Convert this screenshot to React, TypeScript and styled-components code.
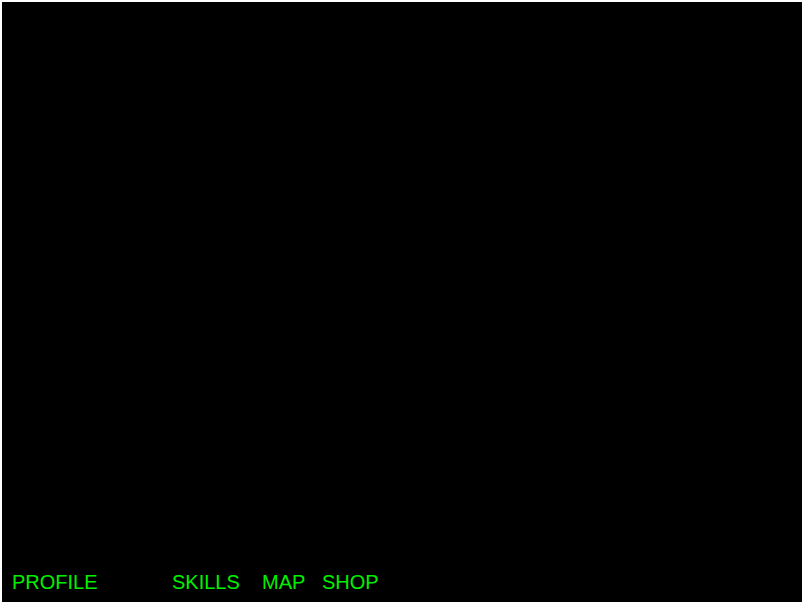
import React from "react";
import styled, { createGlobalStyle } from "styled-components";

const Global = createGlobalStyle`
  html, body {
    margin: 0;
    padding: 0;
    background: #ffffff;
  }
  body {
    font-family: "Liberation Sans", Arial, sans-serif;
  }
`;

const Screen = styled.div`
  margin: 2px 0 0 2px;
  width: 800px;
  height: 600px;
  background: #000000;
  display: flex;
  flex-direction: column;
  justify-content: flex-end;
`;

const Nav = styled.nav`
  display: flex;
  align-items: flex-end;
  padding: 0 10px 8px 10px;
`;

const Tab = styled.span<{ $slot?: number }>`
  flex: 0 0 ${(p) => (p.$slot ? `${p.$slot}px` : "auto")};
  color: #00f000;
  font-family: "Liberation Sans", Arial, sans-serif;
  font-size: 20px;
  line-height: 23px;
  white-space: nowrap;
`;

const tabs: { label: string; slot?: number }[] = [
  { label: "PROFILE", slot: 160 },
  { label: "SKILLS", slot: 90 },
  { label: "MAP", slot: 60 },
  { label: "SHOP" },
];

export default function App() {
  return (
    <>
      <Global />
      <Screen>
        <Nav>
          {tabs.map((t) => (
            <Tab key={t.label} $slot={t.slot}>
              {t.label}
            </Tab>
          ))}
        </Nav>
      </Screen>
    </>
  );
}
